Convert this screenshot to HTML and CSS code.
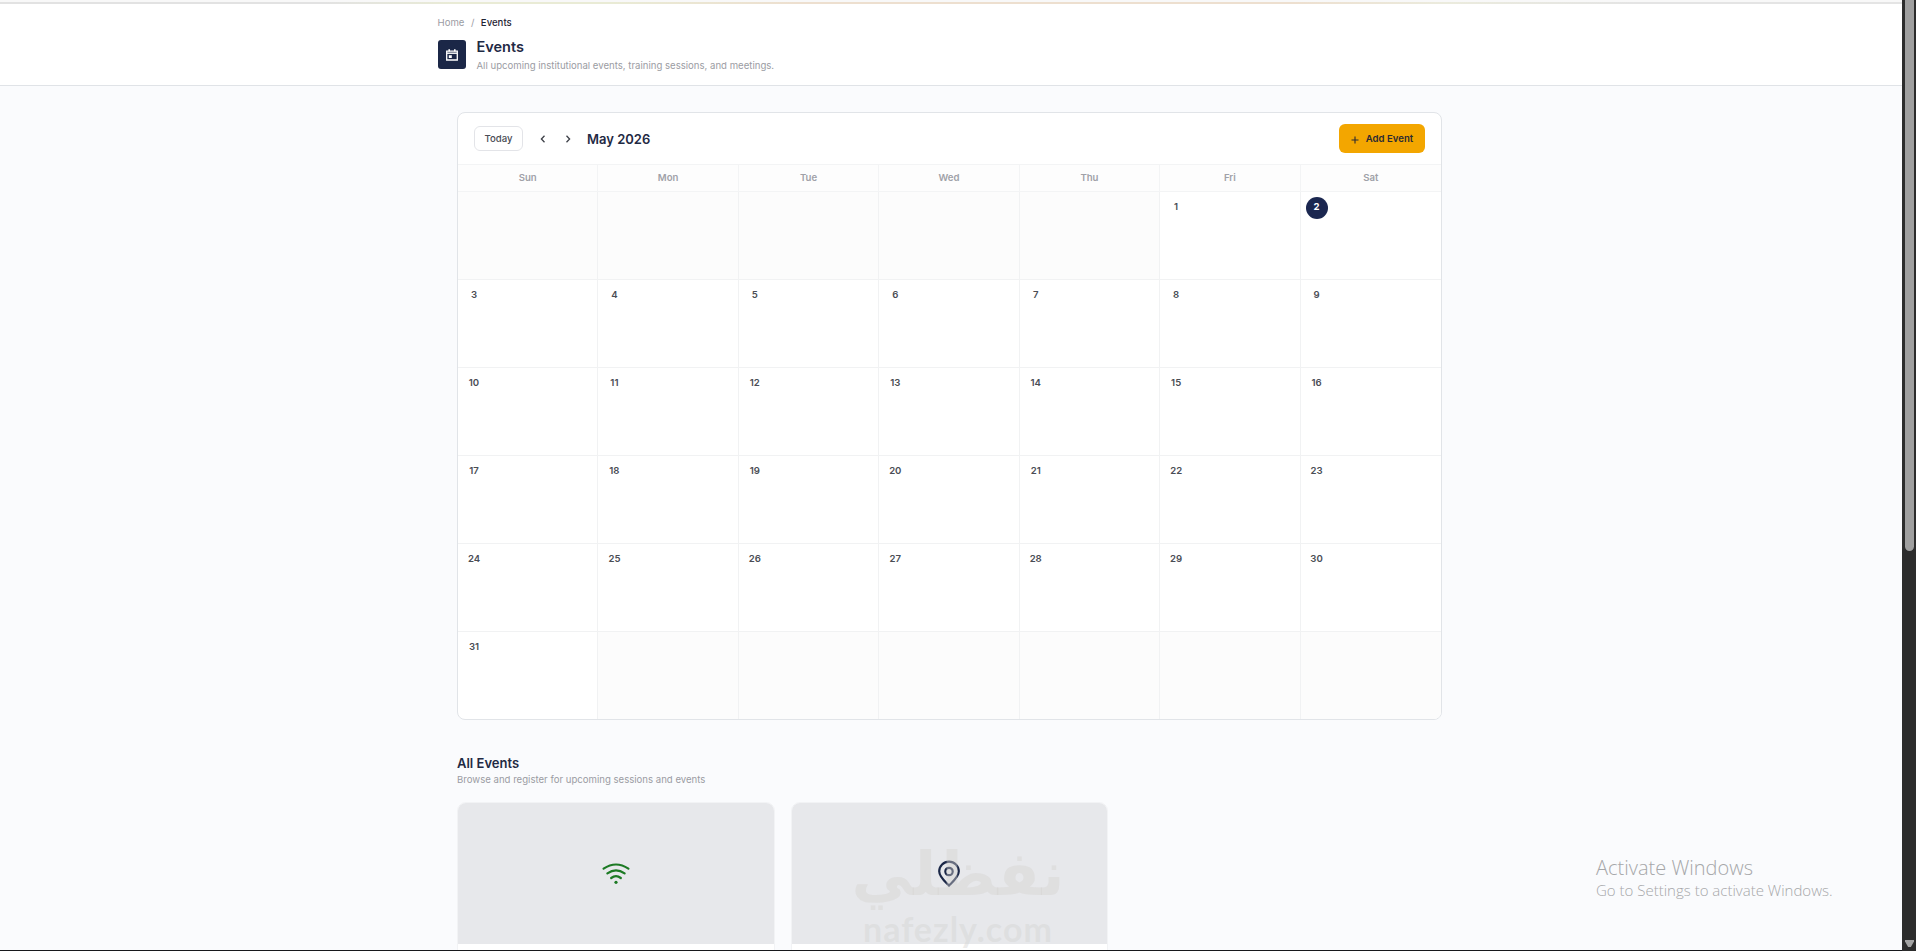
FILE: index.html
```html
<!DOCTYPE html>
<html lang="en">
<head>
    <meta charset="UTF-8">
    <meta name="viewport" content="width=device-width, initial-scale=1.0">
    <title>Events</title>
    <link rel="stylesheet" href="styles.css">
</head>
<body>
    <div class="page">
        <div class="top-strip"></div>
        <header class="page-header">
            <div class="header-inner">
                <nav class="breadcrumb">
                    <span>Home</span>
                    <span class="sep">/</span>
                    <span class="current">Events</span>
                </nav>
                <div class="title-row">
                    <div class="title-icon">
                        <svg width="14" height="14" viewBox="0 0 14 14" fill="none" stroke="#fff">
                            <path d="M1.700 3.200h10.600v8.800H1.700z" stroke-width="1.3"/>
                            <path d="M2 5.200h10" stroke-width="1.4"/>
                            <path d="M4.200 1.200v2.400M9.800 1.200v2.400" stroke-width="1.600"/>
                            <path d="M3.800 7.200h3v2.800h-3z" fill="#fff" stroke="none"/>
                        </svg>
                    </div>
                    <div>
                        <h1>Events</h1>
                        <p class="subtitle">All upcoming institutional events, training sessions, and meetings.</p>
                    </div>
                </div>
            </div>
        </header>

        <main class="content">
            <section class="calendar">
                <div class="toolbar">
                    <button class="today-btn">Today</button>
                    <button class="nav-btn">
                        <svg width="10" height="10" viewBox="0 0 10 10"><path d="M6.500 1.800 3.400 5l3.100 3.200"/></svg>
                    </button>
                    <button class="nav-btn">
                        <svg width="10" height="10" viewBox="0 0 10 10"><path d="M3.500 1.800 6.600 5 3.500 8.200"/></svg>
                    </button>
                    <h2 class="month">May 2026</h2>
                    <button class="add-btn">
                        <svg width="8" height="8" viewBox="0 0 8 8"><path d="M4 .5v7M.5 4h7"/></svg>
                        <span>Add Event</span>
                    </button>
                </div>
                <div class="weekdays">
                    <div>Sun</div><div>Mon</div><div>Tue</div><div>Wed</div><div>Thu</div><div>Fri</div><div>Sat</div>
                </div>
                <div class="days" id="days"></div>
            </section>

            <section class="all-events">
                <h2>All Events</h2>
                <p class="subtitle">Browse and register for upcoming sessions and events</p>
                <div class="cards">
                    <article class="card">
                        <div class="card-image">
                            <svg class="wifi" width="28" height="24" viewBox="0 0 28 24">
                                <path d="M1.6 6.700Q14-1.700 26.400 6.700M5.400 11.400q8.600-6.200 17.200 0M9.200 16q4.800-3.600 9.600 0"/>
                                <circle cx="14" cy="20.300" r="1.600"/>
                            </svg>
                        </div>
                    </article>
                    <article class="card">
                        <div class="card-image">
                            <svg class="pin" width="24" height="28" viewBox="0 0 24 28">
                                <path d="M12 25.600C8.500 22 2.200 17 2.200 11.300a9.800 9.600 0 0 1 19.600 0C21.800 17 15.500 22 12 25.600z"/>
                                <circle cx="12" cy="11.500" r="3.700"/>
                            </svg>
                        </div>
                    </article>
                </div>
            </section>
        </main>

        <div class="watermark">
            <div class="watermark-ar" lang="ar" dir="rtl">نفظلي</div>
            <div class="watermark-en">nafezly.com</div>
        </div>

        <div class="activate">
            <div class="activate-title">Activate Windows</div>
            <div class="activate-text">Go to Settings to activate Windows.</div>
        </div>
    </div>

    <div class="scrollbar">
        <div class="thumb"></div>
        <div class="arrow"></div>
    </div>

    <script>
        const days = document.getElementById('days');
        const firstDay = 5; // Friday
        const today = 2;

        for (let i = 0; i < 42; i++) {
            const date = i - firstDay + 1;
            const cell = document.createElement('div');
            cell.classList.add('day');
            if (date < 1 || date > 31) {
                cell.classList.add('empty');
            } else {
                const number = document.createElement('span');
                number.classList.add('number');
                if (date === today) {
                    number.classList.add('today');
                }
                number.textContent = date;
                cell.appendChild(number);
            }
            days.appendChild(cell);
        }
    </script>
</body>
</html>
```
FILE: styles.css
```css
* {
    box-sizing: border-box;
}

body {
    margin: 0;
    height: 951px;
    display: flex;
    overflow: hidden;
    background-color: #fafbfd;
    font-family: Inter, sans-serif;
    font-size: 9.6px;
    color: #1f2a44;
}

h1, h2, p {
    margin: 0;
}

button {
    font-family: inherit;
    border: none;
    background: none;
    padding: 0;
}

.page {
    position: relative;
    flex: 1;
    height: 951px;
    overflow: hidden;
    border-bottom: 1px solid #17181c;
}

.top-strip {
    height: 4px;
    background: linear-gradient(to right, #e2e2e2, #e2e2e2 17%, #e9ebd5 24%, #e9ebd5 32%, #eddfcf 42%, #eddfcf 68%, #ebebdd 76%, #e4e4e4 86%) bottom / 100% 2px no-repeat #f8f8f8;
}

/* Header */
.page-header {
    height: 82px;
    background-color: #fff;
    border-bottom: 1px solid #e0e3e7;
}

.header-inner {
    width: 1027px;
    margin: 0 auto;
    padding-top: 12px;
}

.breadcrumb {
    display: flex;
    gap: 6.5px;
    line-height: 14px;
    color: #9b9ca3;
}

.breadcrumb .current {
    color: #1f2433;
    font-weight: 500;
}

.title-row {
    display: flex;
    gap: 11px;
    margin-top: 10px;
}

.title-icon {
    width: 28px;
    height: 29px;
    border-radius: 3px;
    background-color: #1b2747;
    display: flex;
    align-items: center;
    justify-content: center;
}

h1 {
    font-size: 14.5px;
    line-height: 18px;
    font-weight: 600;
    margin-top: -2px;
}

.subtitle {
    color: #9b9ca3;
    line-height: 14px;
    margin-top: 3px;
}

/* Calendar */
.content {
    width: 985px;
    margin-left: 457px;
    padding-top: 26px;
}

.calendar {
    height: 608px;
    background-color: #fff;
    border: 1px solid #e1e4e8;
    border-radius: 8px;
    overflow: hidden;
}

.toolbar {
    height: 51px;
    padding: 0 16px;
    display: flex;
    align-items: center;
}

.today-btn {
    width: 49px;
    height: 25px;
    border: 1px solid #e3e4e8;
    border-radius: 6px;
    font-size: 9.6px;
    font-weight: 500;
    color: #4a4d55;
    margin-right: 7px;
}

.nav-btn {
    width: 25px;
    height: 25px;
    display: flex;
    align-items: center;
    justify-content: center;
}

.nav-btn svg {
    fill: none;
    stroke: #3d4048;
    stroke-width: 1.3;
}

.month {
    font-size: 13px;
    font-weight: 600;
    margin-left: 7px;
}

.add-btn {
    width: 86px;
    height: 29px;
    margin-left: auto;
    border-radius: 6px;
    background-color: #f3a600;
    color: #2b2a33;
    font-size: 9.6px;
    font-weight: 600;
    display: flex;
    align-items: center;
    justify-content: center;
    gap: 7px;
}

.add-btn svg {
    fill: none;
    stroke: #2b2a33;
    stroke-width: 1.1;
    margin-top: 2px;
}

.weekdays {
    height: 28px;
    display: grid;
    grid-template-columns: repeat(7, 1fr);
    background-color: #fdfdfd;
    border-top: 1px solid #f3f4f5;
    border-bottom: 1px solid #f3f4f5;
    line-height: 25px;
    text-align: center;
    font-weight: 600;
    color: #a0a1a8;
}

.weekdays div {
    border-right: 1px solid #f3f4f5;
}

.days {
    display: grid;
    grid-template-columns: repeat(7, 1fr);
    grid-auto-rows: 88px;
}

.day {
    border-right: 1px solid #f1f2f3;
    border-bottom: 1px solid #f1f2f3;
    padding: 5px;
}

.weekdays div:nth-child(7n),
.day:nth-child(7n) {
    border-right: none;
}

.day.empty {
    background-color: #fcfcfc;
}

.number {
    display: block;
    width: 22px;
    height: 22px;
    line-height: 20px;
    text-align: center;
    font-weight: 600;
    color: #4a4d55;
}

.number.today {
    border-radius: 50%;
    background-color: #1b2750;
    color: #fff;
    font-weight: 700;
}

/* Event list */
.all-events {
    padding-top: 34px;
}

.all-events h2 {
    font-size: 13px;
    line-height: 18px;
    font-weight: 600;
}

.all-events .subtitle {
    margin-top: 1px;
}

.cards {
    display: grid;
    grid-template-columns: repeat(3, 1fr);
    gap: 16px;
    margin-top: 15px;
}

.card {
    height: 260px;
    background-color: #fff;
    border: 1px solid #f2f3f5;
    border-radius: 9px;
    overflow: hidden;
}

.card-image {
    height: 141px;
    background-color: #e7e8eb;
    display: flex;
    align-items: center;
    justify-content: center;
}

.card-image svg {
    fill: none;
    stroke-width: 2.2;
    stroke-linecap: round;
}

.card-image .wifi {
    stroke: #1d7a24;
}

.wifi circle {
    fill: #1d7a24;
    stroke: none;
}

.card-image .pin {
    stroke: #1b2747;
}

/* Overlays */
.watermark {
    position: absolute;
    left: 850px;
    top: 839px;
    width: 216px;
    color: rgba(211, 210, 208, 0.42);
    font-weight: 700;
    text-align: center;
}

.watermark-ar {
    font-family: "DejaVu Sans", sans-serif;
    font-size: 61px;
    line-height: 70px;
    white-space: nowrap;
}

.watermark-en {
    font-family: Lato, sans-serif;
    font-size: 34px;
    line-height: 40px;
    letter-spacing: 1px;
}

.activate {
    position: absolute;
    left: 1596px;
    top: 855px;
    font-family: "Open Sans", sans-serif;
    font-weight: 300;
    color: #a6a7a9;
    white-space: nowrap;
}

.activate-title {
    font-size: 20px;
    line-height: 26px;
}

.activate-text {
    font-size: 15px;
    line-height: 19px;
}

/* Scrollbar */
.scrollbar {
    width: 14px;
    height: 951px;
    padding: 0 2px 4px 3px;
    background-color: #2c2c2c;
    display: flex;
    flex-direction: column;
    justify-content: space-between;
}

.thumb {
    height: 551px;
    background-color: #9f9f9f;
    border-radius: 0 0 5px 5px;
}

.arrow {
    height: 7px;
    background-color: #a3a3a3;
    clip-path: polygon(0 0, 100% 0, 100% 20%, 65% 100%, 35% 100%, 0 20%);
}
```
